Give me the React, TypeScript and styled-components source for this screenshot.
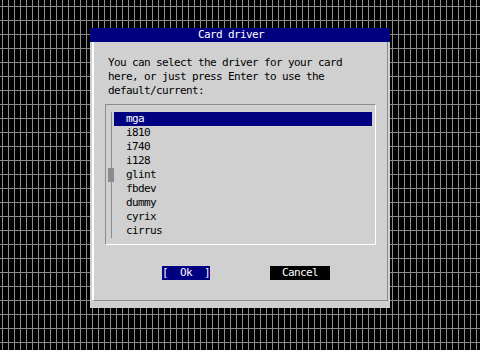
import React from "react";
import styled, { createGlobalStyle } from "styled-components";

const GlobalStyle = createGlobalStyle`
  html, body {
    margin: 0;
    padding: 0;
    background: #000;
  }
  body {
    font-family: "DejaVu Sans Mono", "Liberation Mono", monospace;
  }
`;

const Screen = styled.div`
  width: 480px;
  height: 350px;
  box-sizing: border-box;
  padding: 28px 0 0 90px;
  background-color: #000;
  background-image:
    linear-gradient(to right, transparent 2px, #8c8c8c 2px, #8c8c8c 3px, transparent 3px),
    linear-gradient(to bottom, transparent 6px, #8c8c8c 6px, #8c8c8c 7px, transparent 7px);
  background-size: 6px 14px;
  overflow: hidden;
`;

const Dialog = styled.div`
  width: 300px;
  height: 280px;
  background: #d0d0d0;
  display: flex;
  flex-direction: column;
`;

const Cell = styled.div`
  font-family: "DejaVu Sans Mono", "Liberation Mono", monospace;
  font-size: 11px;
  letter-spacing: -0.62px;
  line-height: 14px;
  white-space: pre;
`;

const TitleBar = styled(Cell)`
  height: 14px;
  background: #000080;
  color: #fff;
  padding-left: 108px;
`;

const Frame = styled.div`
  margin-left: 2px;
  width: 296px;
  height: 258px;
  box-sizing: content-box;
  border-left: 2px solid #fff;
  border-right: 1px solid #8c8c8c;
  border-bottom: 1px solid #8c8c8c;
  box-sizing: border-box;
  height: 259px;
  padding: 14px 0 0 0;
  display: flex;
  flex-direction: column;
`;

const Prompt = styled(Cell)`
  color: #000;
  padding-left: 14px;
`;

const ListBox = styled.div`
  margin: 6px 0 0 11px;
  width: 271px;
  height: 141px;
  box-sizing: border-box;
  border-top: 1px solid #8c8c8c;
  border-left: 1px solid #8c8c8c;
  border-right: 1px solid #fff;
  border-bottom: 1px solid #fff;
  padding: 7px 0 0 2px;
  display: flex;
  flex-direction: row;
`;

const Track = styled.div`
  width: 6px;
  height: 126px;
  background: linear-gradient(to right, transparent 3px, #8c8c8c 3px, #8c8c8c 4px, transparent 4px);
  display: flex;
  flex-direction: column;
`;

const Thumb = styled.div<{ $row: number }>`
  width: 6px;
  height: 14px;
  margin-top: ${(p) => p.$row * 14}px;
  background: #8c8c8c;
`;

const Items = styled.div`
  width: 258px;
  display: flex;
  flex-direction: column;
`;

const Item = styled(Cell)<{ $selected?: boolean }>`
  height: 14px;
  padding-left: 12px;
  background: ${(p) => (p.$selected ? "#000080" : "transparent")};
  color: ${(p) => (p.$selected ? "#fff" : "#000")};
`;

const ButtonRow = styled.div`
  margin-top: 21px;
  padding-left: 68px;
  display: flex;
  flex-direction: row;
  gap: 60px;
`;

const Button = styled(Cell)<{ $focused?: boolean }>`
  height: 14px;
  background: ${(p) => (p.$focused ? "#000080" : "#000")};
  color: #fff;
`;

const drivers = ["mga", "i810", "i740", "i128", "glint", "fbdev", "dummy", "cyrix", "cirrus"];

export default function App() {
  return (
    <>
      <GlobalStyle />
      <Screen>
        <Dialog>
          <TitleBar>Card driver</TitleBar>
          <Frame>
            <Prompt>{"You can select the driver for your card\nhere, or just press Enter to use the\ndefault/current:"}</Prompt>
            <ListBox>
              <Track>
                <Thumb $row={4} />
              </Track>
              <Items>
                {drivers.map((d, i) => (
                  <Item key={d} $selected={i === 0}>
                    {d}
                  </Item>
                ))}
              </Items>
            </ListBox>
            <ButtonRow>
              <Button $focused>{"[  Ok  ]"}</Button>
              <Button>{"  Cancel  "}</Button>
            </ButtonRow>
          </Frame>
        </Dialog>
      </Screen>
    </>
  );
}
